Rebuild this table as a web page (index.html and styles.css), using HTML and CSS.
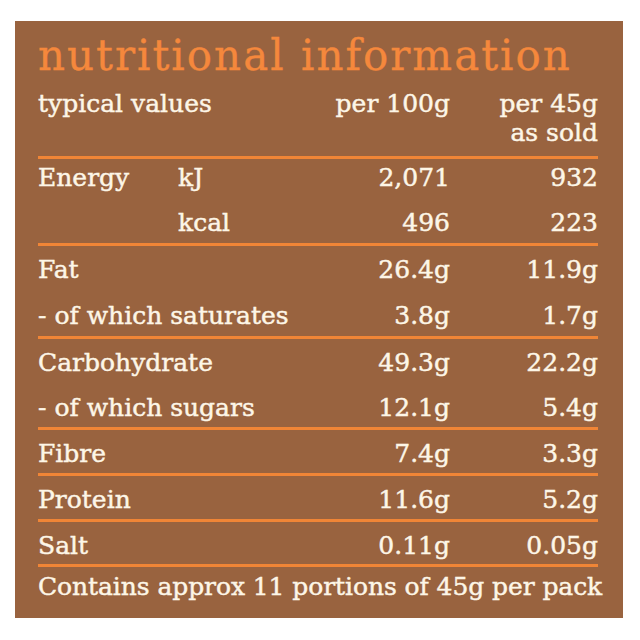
FILE: index.html
```html
<!DOCTYPE html>
<html lang="en">
<head>
<meta charset="utf-8">
<title>Nutritional information</title>
<link rel="stylesheet" href="styles.css">
</head>
<body>
<section class="panel">
  <h1 class="title">nutritional information</h1>
  <div class="head">
    <div class="c-label">typical values</div>
    <div class="c-v1">per 100g</div>
    <div class="c-v2">per 45g<br>as sold</div>
  </div>
  <div class="group g-energy">
    <div class="c-label r1">Energy</div><div class="c-unit r1">kJ</div><div class="c-v1 r1">2,071</div><div class="c-v2 r1">932</div>
    <div class="c-label r2"></div><div class="c-unit r2">kcal</div><div class="c-v1 r2">496</div><div class="c-v2 r2">223</div>
  </div>
  <div class="group g-double">
    <div class="c-wide">Fat</div><div class="c-v1">26.4g</div><div class="c-v2">11.9g</div>
    <div class="c-wide">- of which saturates</div><div class="c-v1">3.8g</div><div class="c-v2">1.7g</div>
  </div>
  <div class="group g-double g-carb">
    <div class="c-wide">Carbohydrate</div><div class="c-v1">49.3g</div><div class="c-v2">22.2g</div>
    <div class="c-wide">- of which sugars</div><div class="c-v1">12.1g</div><div class="c-v2">5.4g</div>
  </div>
  <div class="group">
    <div class="c-wide">Fibre</div><div class="c-v1">7.4g</div><div class="c-v2">3.3g</div>
  </div>
  <div class="group">
    <div class="c-wide">Protein</div><div class="c-v1">11.6g</div><div class="c-v2">5.2g</div>
  </div>
  <div class="group g-last">
    <div class="c-wide">Salt</div><div class="c-v1">0.11g</div><div class="c-v2">0.05g</div>
  </div>
  <p class="note">Contains approx 11 portions of 45g per pack</p>
</section>
</body>
</html>
```
FILE: styles.css
```css
html, body {
  margin: 0;
  padding: 0;
  background: #ffffff;
}
body {
  padding: 21px 0 0 15px;
}
.panel {
  width: 608px;
  height: 597px;
  box-sizing: border-box;
  background: #99633f;
  padding: 12px 25px 0 23px;
  color: #fdf6e7;
  font-family: "DejaVu Serif", "Liberation Serif", serif;
  font-size: 25px;
  -webkit-text-stroke: 0.45px #fdf6e7;
}
.title {
  margin: 0;
  font-weight: normal;
  font-size: 42px;
  line-height: 46px;
  color: #f5883c;
  letter-spacing: 2px;
  -webkit-text-stroke: 0.3px #f5883c;
}
.head {
  display: grid;
  grid-template-columns: 140px 152px 120px 148px;
  line-height: 29px;
  padding: 10px 0 9px;
  border-bottom: 3px solid #f08536;
}
.head .c-label { grid-column: 1 / 3; }
.head .c-v1 { grid-column: 3; }
.head .c-v2 { grid-column: 4; }
.group {
  display: grid;
  grid-template-columns: 140px 152px 120px 148px;
  grid-auto-rows: 43px;
  line-height: 41px;
  border-bottom: 3px solid #f08536;
}
.group > div {
  padding-top: 3px;
}
.g-energy {
  grid-auto-rows: 42px;
}
.g-energy > .r1 {
  padding-top: 0;
  line-height: 38px;
}
.g-energy > .r2 {
  padding-top: 2px;
  line-height: 39px;
}
.g-double {
  row-gap: 2px;
  grid-auto-rows: 44px;
}
.g-carb {
  grid-auto-rows: 43px;
}
.g-last {
  grid-auto-rows: 42px;
}
.c-wide { grid-column: 1 / 3; }
.c-v1, .c-v2 { text-align: right; }
.note {
  margin: 0;
  line-height: 40px;
  white-space: nowrap;
  letter-spacing: -0.08px;
}
```
